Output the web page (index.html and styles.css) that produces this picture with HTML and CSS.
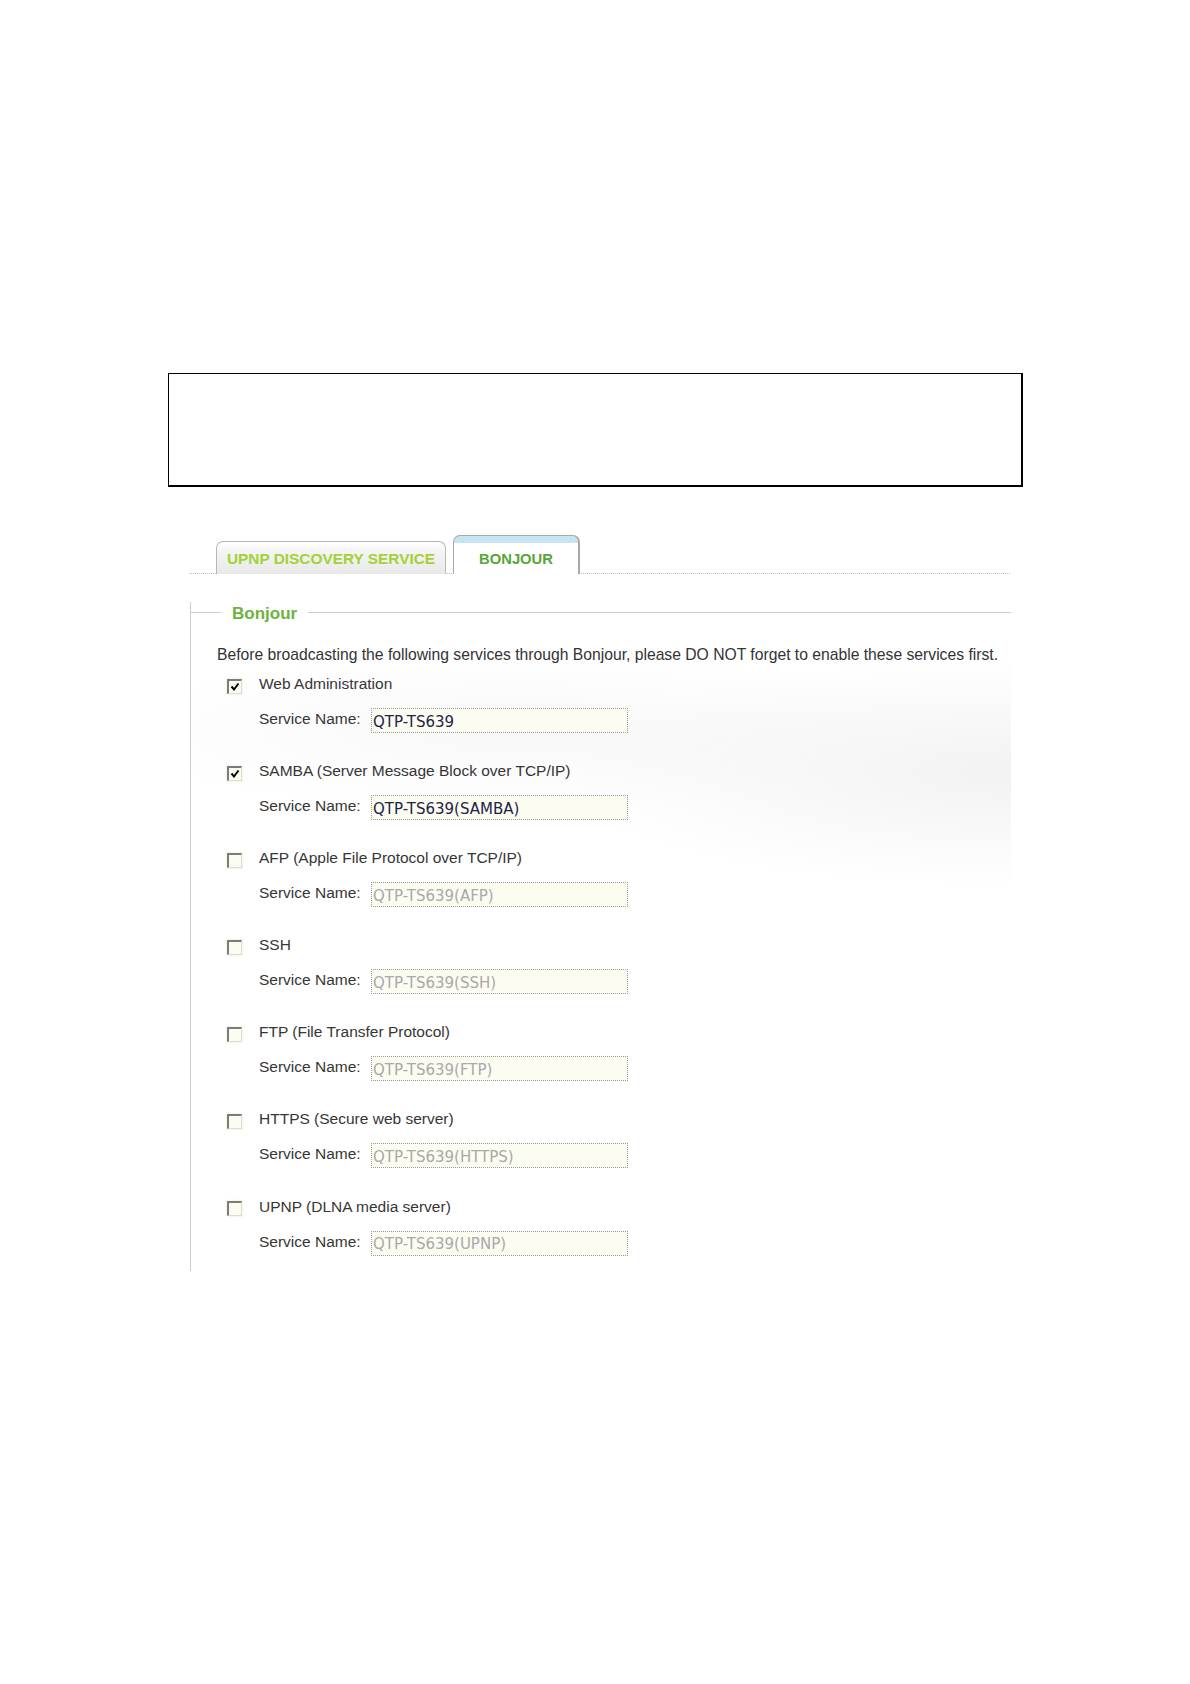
FILE: index.html
```html
<!DOCTYPE html>
<html lang="en">
<head>
<meta charset="utf-8">
<title>Bonjour</title>
<link rel="stylesheet" href="styles.css">
</head>
<body>
<div class="page">
  <div class="note-box"></div>

  <div class="tabs">
    <div class="tab tab-upnp">UPNP DISCOVERY SERVICE</div>
    <div class="tab tab-bonjour">BONJOUR</div>
  </div>

  <div class="group">
    <div class="group-head">
      <span class="seg"></span>
      <span class="legend">Bonjour</span>
      <span class="line"></span>
    </div>
    <div class="group-body">
      <p class="intro">Before broadcasting the following services through Bonjour, please DO NOT forget to enable these services first.</p>

      <div class="svc">
        <div class="check-row">
          <span class="cb"><svg class="tick" viewBox="0 0 10 10" width="10" height="10"><path d="M1.5 4.5 L4 7.5 L8.5 1.5" fill="none" stroke="#000" stroke-width="2"/></svg></span>
          <span class="check-label">Web Administration</span>
        </div>
        <div class="name-row">
          <span class="name-label">Service Name:</span>
          <input class="name-input" type="text" value="QTP-TS639">
        </div>
      </div>

      <div class="svc">
        <div class="check-row">
          <span class="cb"><svg class="tick" viewBox="0 0 10 10" width="10" height="10"><path d="M1.5 4.5 L4 7.5 L8.5 1.5" fill="none" stroke="#000" stroke-width="2"/></svg></span>
          <span class="check-label">SAMBA (Server Message Block over TCP/IP)</span>
        </div>
        <div class="name-row">
          <span class="name-label">Service Name:</span>
          <input class="name-input" type="text" value="QTP-TS639(SAMBA)">
        </div>
      </div>

      <div class="svc">
        <div class="check-row">
          <span class="cb"></span>
          <span class="check-label">AFP (Apple File Protocol over TCP/IP)</span>
        </div>
        <div class="name-row">
          <span class="name-label">Service Name:</span>
          <input class="name-input off" type="text" value="QTP-TS639(AFP)" disabled>
        </div>
      </div>

      <div class="svc">
        <div class="check-row">
          <span class="cb"></span>
          <span class="check-label">SSH</span>
        </div>
        <div class="name-row">
          <span class="name-label">Service Name:</span>
          <input class="name-input off" type="text" value="QTP-TS639(SSH)" disabled>
        </div>
      </div>

      <div class="svc">
        <div class="check-row">
          <span class="cb"></span>
          <span class="check-label">FTP (File Transfer Protocol)</span>
        </div>
        <div class="name-row">
          <span class="name-label">Service Name:</span>
          <input class="name-input off" type="text" value="QTP-TS639(FTP)" disabled>
        </div>
      </div>

      <div class="svc">
        <div class="check-row">
          <span class="cb"></span>
          <span class="check-label">HTTPS (Secure web server)</span>
        </div>
        <div class="name-row">
          <span class="name-label">Service Name:</span>
          <input class="name-input off" type="text" value="QTP-TS639(HTTPS)" disabled>
        </div>
      </div>

      <div class="svc">
        <div class="check-row">
          <span class="cb"></span>
          <span class="check-label">UPNP (DLNA media server)</span>
        </div>
        <div class="name-row">
          <span class="name-label">Service Name:</span>
          <input class="name-input off" type="text" value="QTP-TS639(UPNP)" disabled>
        </div>
      </div>
    </div>
  </div>
</div>
</body>
</html>
```

FILE: styles.css
```css
html, body {
  margin: 0;
  padding: 0;
  background: #ffffff;
}

body {
  font-family: "Liberation Sans", Arial, sans-serif;
  color: #333333;
}

.page {
  padding-top: 373px;
  padding-bottom: 100px;
}

.note-box {
  margin-left: 168px;
  width: 852px;
  height: 111px;
  border: 1px solid #000000;
  border-right-width: 2px;
  border-bottom-width: 2px;
}

/* ---------- tabs ---------- */
.tabs {
  margin: 48px 0 0 189px;
  width: 794px;
  height: 38px;
  padding-left: 27px;
  display: flex;
  align-items: flex-end;
  gap: 7px;
  border-bottom: 1px dotted #b9b9b9;
}

.tab {
  box-sizing: border-box;
  margin-bottom: -1px;
  border: 1px solid #b7b7b7;
  border-bottom: none;
  border-radius: 7px 7px 0 0;
  display: flex;
  align-items: center;
  justify-content: center;
  font-family: "Liberation Sans", Arial, sans-serif;
  font-weight: bold;
  white-space: nowrap;
}

.tab-upnp {
  width: 230px;
  height: 33px;
  padding-top: 1px;
  font-size: 15.4px;
  color: #a3d136;
  background: linear-gradient(#ffffff 0%, #f4f4f4 30%, #e9e9e9 100%);
}

.tab-bonjour {
  width: 127px;
  height: 39px;
  padding-top: 8px;
  font-size: 14.8px;
  color: #58a538;
  border-color: #a9a9a9;
  border-right-width: 2px;
  background: linear-gradient(#c6e5f1 0, #c6e5f1 7px, #ffffff 7px);
}

/* ---------- group box ---------- */
.group {
  margin: 38px 0 0 190px;
  width: 820px;
  border-left: 1px solid #cdcdcd;
}

.group-head {
  margin-top: -10px;
  height: 20px;
  display: flex;
  align-items: center;
}

.seg {
  width: 30px;
  height: 1px;
  background: #cdcdcd;
}

.line {
  flex: 1;
  height: 1px;
  background: #cdcdcd;
}

.legend {
  padding: 4px 11px 0;
  font-weight: bold;
  font-size: 17px;
  line-height: 20px;
  color: #6bb33d;
}

.group-body {
  padding: 24px 0 15px 26px;
  background:
    radial-gradient(ellipse 460px 115px at 100% 150px, #f2f2f2 0%, rgba(255,255,255,0) 100%),
    radial-gradient(ellipse 420px 80px at 40% 110px, #f8f8f8 0%, rgba(255,255,255,0) 100%);
}

.intro {
  margin: 0;
  font-size: 15.7px;
  line-height: 18px;
  white-space: nowrap;
  color: #333333;
}

.svc {
  margin-top: 28.1px;
}

.svc:first-of-type {
  margin-top: 10px;
}

.check-row {
  height: 20px;
  display: flex;
  align-items: center;
  padding-left: 10px;
}

.cb {
  box-sizing: border-box;
  width: 15px;
  height: 15px;
  margin-top: 4px;
  margin-right: 17px;
  border-top: 2px solid #7b7b7b;
  border-left: 2px solid #7b7b7b;
  border-right: 1px solid #dedcd0;
  border-bottom: 1px solid #dedcd0;
  background: #fbfbf2;
  box-shadow: 0 0 2px 1px #f4f4ea;
  display: flex;
  align-items: center;
  justify-content: center;
}

.tick {
  display: block;
}

.check-label {
  font-size: 15.5px;
  line-height: 20px;
  color: #363636;
  white-space: nowrap;
}

.name-row {
  margin-top: 14px;
  height: 25px;
  padding-left: 42px;
  display: flex;
  align-items: center;
}

.name-label {
  width: 112px;
  font-size: 15.5px;
  line-height: 20px;
  margin-top: -3px;
  color: #363636;
  white-space: nowrap;
}

.name-input {
  box-sizing: border-box;
  width: 257px;
  height: 25px;
  margin: 0;
  padding: 2px 1px 0;
  border: 1px dotted #9a9a9a;
  background: #fcfcf1;
  font-family: "DejaVu Sans", Verdana, sans-serif;
  font-size: 15px;
  color: #22224a;
  outline: none;
}

.name-input.off {
  color: #a9a9a9;
  -webkit-text-fill-color: #a9a9a9;
  opacity: 1;
}
```
